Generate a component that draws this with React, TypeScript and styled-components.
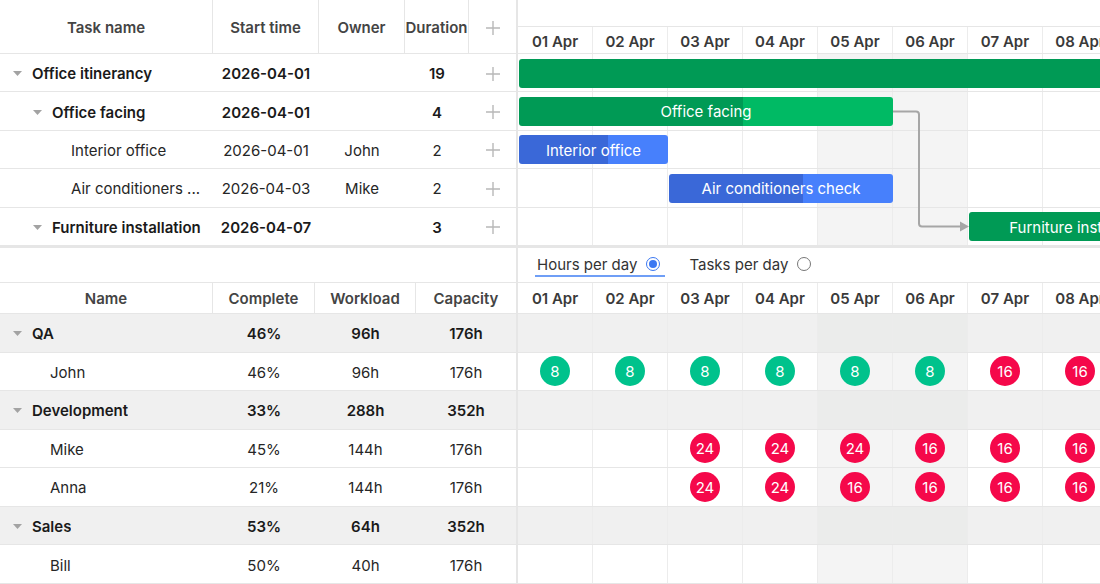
import React from "react";
import styled, { createGlobalStyle } from "styled-components";

const GlobalStyle = createGlobalStyle`
  html, body { margin: 0; padding: 0; background: #fff; }
  body {
    font-family: Inter, "Noto Sans", "Liberation Sans", sans-serif;
    color: #222;
    overflow: hidden;
  }
  * { box-sizing: border-box; }
`;

const DAY_W = 75;
const DAYS = ["01 Apr", "02 Apr", "03 Apr", "04 Apr", "05 Apr", "06 Apr", "07 Apr", "08 Apr"];
const WEEKEND = [4, 5];
const LINE = "#e6e6e6";
const VLINE = "#ececec";

type Task = {
  name: string;
  start: string;
  owner: string;
  duration: number;
  level: number;
  toggle: boolean;
  bold: boolean;
  startDay: number;
  days: number;
  kind: "summary" | "task";
};

const TASKS: Task[] = [
  { name: "Office itinerancy", start: "2026-04-01", owner: "", duration: 19, level: 0, toggle: true, bold: true, startDay: 0, days: 19, kind: "summary" },
  { name: "Office facing", start: "2026-04-01", owner: "", duration: 4, level: 1, toggle: true, bold: true, startDay: 0, days: 5, kind: "summary" },
  { name: "Interior office", start: "2026-04-01", owner: "John", duration: 2, level: 2, toggle: false, bold: false, startDay: 0, days: 2, kind: "task" },
  { name: "Air conditioners check", start: "2026-04-03", owner: "Mike", duration: 2, level: 2, toggle: false, bold: false, startDay: 2, days: 3, kind: "task" },
  { name: "Furniture installation", start: "2026-04-07", owner: "", duration: 3, level: 1, toggle: true, bold: true, startDay: 6, days: 3, kind: "summary" },
];

type Res = {
  name: string;
  complete: string;
  workload: string;
  capacity: string;
  group: boolean;
  load: number[];
};

const RESOURCES: Res[] = [
  { name: "QA", complete: "46%", workload: "96h", capacity: "176h", group: true, load: [] },
  { name: "John", complete: "46%", workload: "96h", capacity: "176h", group: false, load: [8, 8, 8, 8, 8, 8, 16, 16] },
  { name: "Development", complete: "33%", workload: "288h", capacity: "352h", group: true, load: [] },
  { name: "Mike", complete: "45%", workload: "144h", capacity: "176h", group: false, load: [0, 0, 24, 24, 24, 16, 16, 16] },
  { name: "Anna", complete: "21%", workload: "144h", capacity: "176h", group: false, load: [0, 0, 24, 24, 16, 16, 16, 16] },
  { name: "Sales", complete: "53%", workload: "64h", capacity: "352h", group: true, load: [] },
  { name: "Bill", complete: "50%", workload: "40h", capacity: "176h", group: false, load: [] },
];

/* ---------- layout ---------- */

const Page = styled.div`
  width: 1100px;
  height: 584px;
  overflow: hidden;
  display: flex;
  flex-direction: column;
`;

const Section = styled.div<{ $divider?: boolean }>`
  display: flex;
  flex-shrink: 0;
  border-bottom: ${(p) => (p.$divider ? `2px solid ${LINE}` : "none")};
`;

const LeftPane = styled.div<{ $underline?: boolean }>`
  width: 518px;
  flex-shrink: 0;
  border-right: 2px solid ${LINE};
  border-bottom: ${(p) => (p.$underline ? `1px solid ${LINE}` : "none")};
`;

const RightPane = styled.div`
  flex: 1;
  min-width: 0;
  overflow: hidden;
`;

/* ---------- grid ---------- */

const GridHeader = styled.div<{ $cols: string; $h: number }>`
  display: grid;
  grid-template-columns: ${(p) => p.$cols};
  height: ${(p) => p.$h}px;
  border-bottom: 1px solid ${LINE};
`;

const HeadCell = styled.div<{ $last?: boolean }>`
  display: flex;
  align-items: center;
  justify-content: center;
  padding-top: 2px;
  font-size: 15px;
  font-weight: 600;
  color: #444;
  white-space: nowrap;
  border-right: ${(p) => (p.$last ? "none" : `1px solid ${LINE}`)};
`;

const GridRow = styled.div<{ $cols: string; $h: number; $group?: boolean }>`
  display: grid;
  grid-template-columns: ${(p) => p.$cols};
  height: ${(p) => p.$h}px;
  border-bottom: 1px solid ${LINE};
  background: ${(p) => (p.$group ? "#f0f0f0" : "#fff")};
`;

const Cell = styled.div<{ $bold?: boolean }>`
  display: flex;
  align-items: center;
  justify-content: center;
  padding-top: 2px;
  font-size: 15px;
  font-weight: ${(p) => (p.$bold ? 600 : 400)};
  color: ${(p) => (p.$bold ? "#1a1a1a" : "#262626")};
  white-space: nowrap;
  overflow: hidden;
`;

const NameCell = styled(Cell)<{ $indent: number }>`
  justify-content: flex-start;
  padding-left: ${(p) => p.$indent}px;
  padding-right: 10px;
`;

const NameText = styled.span`
  overflow: hidden;
  text-overflow: ellipsis;
  white-space: nowrap;
`;

const Toggle = styled.span`
  width: 18px;
  margin-right: 6px;
  flex-shrink: 0;
  display: flex;
  align-items: center;
  justify-content: center;
`;

const Caret = () => (
  <svg width="9" height="5" viewBox="0 0 9 5">
    <polygon points="0,0 9,0 4.5,5" fill="#a3a3a3" />
  </svg>
);

const PlusIcon = () => (
  <svg width="16" height="16" viewBox="0 0 16 16">
    <path d="M8 1 V15 M1 8 H15" stroke="#b8b8b8" strokeWidth="1.4" fill="none" />
  </svg>
);

/* ---------- timeline ---------- */

const ScaleTop = styled.div`
  height: 27px;
  border-bottom: 1px solid ${LINE};
`;

const ScaleRow = styled.div<{ $h: number }>`
  display: flex;
  height: ${(p) => p.$h}px;
  border-bottom: 1px solid ${LINE};
`;

const DateCell = styled.div`
  width: ${DAY_W}px;
  flex-shrink: 0;
  display: flex;
  align-items: center;
  justify-content: center;
  padding-top: 2px;
  font-size: 15px;
  font-weight: 600;
  color: #3a3a3a;
  white-space: nowrap;
  border-right: 1px solid ${VLINE};
`;

const ChartBody = styled.div`
  position: relative;
`;

const ChartRow = styled.div<{ $h: number; $group?: boolean }>`
  position: relative;
  display: flex;
  height: ${(p) => p.$h}px;
  border-bottom: 1px solid ${LINE};
  background: ${(p) => (p.$group ? "#f0f0f0" : "#fff")};
`;

const DayCell = styled.div<{ $weekend: boolean; $group?: boolean }>`
  width: ${DAY_W}px;
  flex-shrink: 0;
  display: flex;
  align-items: center;
  justify-content: center;
  border-right: 1px solid ${VLINE};
  background: ${(p) => (p.$weekend ? (p.$group ? "#ebeceb" : "#f4f4f4") : "transparent")};
`;

const BAR_COLORS = {
  summary: { done: "#009a55", rest: "#00ba64" },
  task: { done: "#3a68d8", rest: "#4780fc" },
};

const Bar = styled.div<{ $kind: "summary" | "task"; $progress: number }>`
  position: absolute;
  top: 4.5px;
  height: 29px;
  border-radius: 3px;
  padding-top: 1px;
  background: linear-gradient(
    to right,
    ${(p) => BAR_COLORS[p.$kind].done} 0 ${(p) => p.$progress}%,
    ${(p) => BAR_COLORS[p.$kind].rest} ${(p) => p.$progress}% 100%
  );
  color: #fff;
  font-size: 15px;
  display: flex;
  align-items: center;
  justify-content: center;
  white-space: nowrap;
  overflow: hidden;
`;

const LinkLayer = styled.svg`
  position: absolute;
  top: 0;
  left: 0;
  pointer-events: none;
`;

const Badge = styled.div<{ $over: boolean }>`
  width: 30px;
  height: 30px;
  border-radius: 50%;
  background: ${(p) => (p.$over ? "#f5084a" : "#00c28c")};
  color: #fff;
  font-size: 15px;
  display: flex;
  align-items: center;
  justify-content: center;
  padding-top: 1px;
`;

/* ---------- toolbar ---------- */

const Toolbar = styled.div`
  height: 35px;
  display: flex;
  align-items: center;
  gap: 22px;
  padding-left: 17px;
  border-bottom: 1px solid ${LINE};
`;

const RadioOption = styled.label<{ $active: boolean }>`
  display: flex;
  align-items: center;
  gap: 9px;
  height: 24px;
  padding: 1px 5px 0 2px;
  font-size: 15px;
  color: #333;
  border-bottom: 2px solid ${(p) => (p.$active ? "#6f9ef6" : "transparent")};
`;

const RadioDot = styled.span<{ $active: boolean }>`
  width: 14px;
  height: 14px;
  border-radius: 50%;
  border: ${(p) => (p.$active ? "1.5px solid #3b78f2" : "1px solid #777")};
  display: flex;
  align-items: center;
  justify-content: center;
  &::after {
    content: "";
    width: 8px;
    height: 8px;
    border-radius: 50%;
    background: ${(p) => (p.$active ? "#3b78f2" : "transparent")};
  }
`;

/* ---------- components ---------- */

const TASK_COLS = "213px 106px 86px 64px 47px";
const RES_COLS = "213px 102px 101px 100px";
const TASK_ROW_H = 38.4;
const RES_ROW_H = 38.57;

function TaskGrid() {
  return (
    <>
      <GridHeader $cols={TASK_COLS} $h={54}>
        <HeadCell>Task name</HeadCell>
        <HeadCell>Start time</HeadCell>
        <HeadCell>Owner</HeadCell>
        <HeadCell>Duration</HeadCell>
        <HeadCell $last>
          <PlusIcon />
        </HeadCell>
      </GridHeader>
      {TASKS.map((t) => (
        <GridRow key={t.name} $cols={TASK_COLS} $h={TASK_ROW_H}>
          <NameCell $indent={t.level === 2 ? 47 : 8 + t.level * 20} $bold={t.bold}>
            <Toggle>{t.toggle ? <Caret /> : null}</Toggle>
            <NameText>{t.name === "Air conditioners check" ? "Air conditioners ..." : t.name}</NameText>
          </NameCell>
          <Cell $bold={t.bold}>{t.start}</Cell>
          <Cell $bold={t.bold}>{t.owner}</Cell>
          <Cell $bold={t.bold}>{t.duration}</Cell>
          <Cell>
            <PlusIcon />
          </Cell>
        </GridRow>
      ))}
    </>
  );
}

function DateScale({ h }: { h: number }) {
  return (
    <ScaleRow $h={h}>
      {DAYS.map((d) => (
        <DateCell key={d}>{d}</DateCell>
      ))}
    </ScaleRow>
  );
}

function TaskChart() {
  const rowMid = (i: number) => i * TASK_ROW_H + 19;
  const from = TASKS[1];
  const to = TASKS[4];
  const x1 = (from.startDay + from.days) * DAY_W;
  const x2 = to.startDay * DAY_W + 1;
  const y1 = rowMid(1);
  const y2 = rowMid(4);
  const xm = x1 + 26;
  return (
    <>
      <ScaleTop />
      <DateScale h={27} />
      <ChartBody>
        {TASKS.map((t) => (
          <ChartRow key={t.name} $h={TASK_ROW_H}>
            {DAYS.map((d, i) => (
              <DayCell key={d} $weekend={WEEKEND.includes(i)} />
            ))}
            <Bar
              $kind={t.kind}
              $progress={60}
              style={{ left: t.startDay * DAY_W + 1, width: t.days * DAY_W - 1 }}
            >
              {t.name}
            </Bar>
          </ChartRow>
        ))}
        <LinkLayer width={600} height={200}>
          <path
            d={`M${x1} ${y1} H${xm - 3} Q${xm} ${y1} ${xm} ${y1 + 3} V${y2 - 3} Q${xm} ${y2} ${xm + 3} ${y2} H${x2 - 8}`}
            stroke="#a6a6a6"
            strokeWidth="2"
            fill="none"
          />
          <polygon points={`${x2 - 9},${y2 - 5} ${x2},${y2} ${x2 - 9},${y2 + 5}`} fill="#a6a6a6" />
        </LinkLayer>
      </ChartBody>
    </>
  );
}

function ResourceGrid() {
  return (
    <>
      <GridHeader $cols={RES_COLS} $h={31}>
        <HeadCell>Name</HeadCell>
        <HeadCell>Complete</HeadCell>
        <HeadCell>Workload</HeadCell>
        <HeadCell $last>Capacity</HeadCell>
      </GridHeader>
      {RESOURCES.map((r) => (
        <GridRow key={r.name} $cols={RES_COLS} $h={RES_ROW_H} $group={r.group}>
          <NameCell $indent={r.group ? 8 : 26} $bold={r.group}>
            <Toggle>{r.group ? <Caret /> : null}</Toggle>
            <NameText>{r.name}</NameText>
          </NameCell>
          <Cell $bold={r.group}>{r.complete}</Cell>
          <Cell $bold={r.group}>{r.workload}</Cell>
          <Cell $bold={r.group}>{r.capacity}</Cell>
        </GridRow>
      ))}
    </>
  );
}

function ResourceChart() {
  return (
    <>
      <DateScale h={31} />
      <ChartBody>
        {RESOURCES.map((r) => (
          <ChartRow key={r.name} $h={RES_ROW_H} $group={r.group}>
            {DAYS.map((d, i) => (
              <DayCell key={d} $weekend={WEEKEND.includes(i)} $group={r.group}>
                {r.load[i] ? <Badge $over={r.load[i] > 8}>{r.load[i]}</Badge> : null}
              </DayCell>
            ))}
          </ChartRow>
        ))}
      </ChartBody>
    </>
  );
}

export default function App() {
  return (
    <Page>
      <GlobalStyle />
      <Section $divider>
        <LeftPane>
          <TaskGrid />
        </LeftPane>
        <RightPane>
          <TaskChart />
        </RightPane>
      </Section>
      <Section>
        <LeftPane $underline />
        <RightPane>
          <Toolbar>
            <RadioOption $active>
              Hours per day
              <RadioDot $active />
            </RadioOption>
            <RadioOption $active={false}>
              Tasks per day
              <RadioDot $active={false} />
            </RadioOption>
          </Toolbar>
        </RightPane>
      </Section>
      <Section>
        <LeftPane>
          <ResourceGrid />
        </LeftPane>
        <RightPane>
          <ResourceChart />
        </RightPane>
      </Section>
    </Page>
  );
}
